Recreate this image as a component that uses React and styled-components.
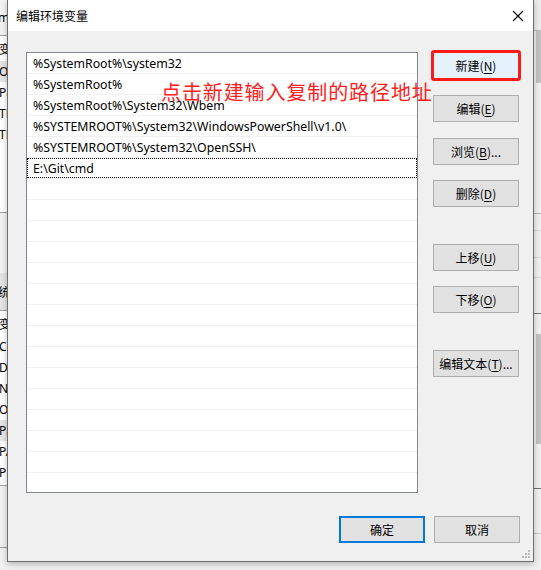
import React from "react";
import styled, { createGlobalStyle } from "styled-components";

const Global = createGlobalStyle`
  html, body { margin: 0; padding: 0; }
  body { font-family: "Noto Sans", "Noto Sans CJK SC", sans-serif; }
`;

const UI = `"Noto Sans", "Noto Sans CJK SC", sans-serif`;
const CJK = `"Noto Sans CJK SC", "Noto Sans", sans-serif`;

const Desktop = styled.div`
  position: relative;
  width: 541px;
  height: 570px;
  overflow: hidden;
  background: #f0f0f0;
`;

/* ---- window behind (left strip) ---- */
const BackLeft = styled.div`
  position: absolute;
  left: -120px;
  top: 0;
  width: 127px;
  height: 570px;
  background: #f0f0f0;
  display: flex;
  flex-direction: column;
  font-family: ${UI};
  font-size: 12px;
  color: #000;
  white-space: nowrap;
`;
const BackTitle = styled.div`
  height: 35px;
  border-bottom: 1px solid #a0a0a0;
  display: flex;
  align-items: center;
  padding-left: 118px;
  background: #f3f3f3;
`;
const BackList = styled.div`
  background: #fff;
  height: ${(p) => p.$h}px;
  display: flex;
  flex-direction: column;
  border-bottom: 1px solid #a0a0a0;
  flex-shrink: 0;
`;
const BackHead = styled.div`
  height: 25px;
  line-height: 25px;
  padding-left: 119px;
  font-family: ${CJK};
  flex-shrink: 0;
`;
const BackRow = styled.div`
  height: 21px;
  line-height: 21px;
  padding-left: 119px;
  flex-shrink: 0;
  background: ${(p) => (p.$sel ? "#e5e5e5" : "transparent")};
`;
const BackGap = styled.div`
  height: ${(p) => p.$h}px;
  flex-shrink: 0;
  display: flex;
  align-items: center;
  padding-left: ${(p) => p.$pl || 118}px;
  font-family: ${CJK};
  background: ${(p) => p.$bg || "transparent"};
  border-bottom: ${(p) => (p.$line ? "1px solid #a0a0a0" : "none")};
`;

/* ---- window behind (right strip) ---- */
const BackRight = styled.div`
  position: absolute;
  left: 533px;
  top: 0;
  width: 8px;
  height: 570px;
  background: #f0f0f0;
  display: flex;
  flex-direction: column;
`;
const RSeg = styled.div`
  height: ${(p) => p.$h}px;
  flex-shrink: 0;
  background: ${(p) => p.$bg || "transparent"};
  border-bottom: ${(p) => (p.$line ? `1px solid ${p.$line}` : "none")};
  display: flex;
  justify-content: flex-end;
`;
const RThumb = styled.div`
  width: 5px;
  height: 100%;
  background: #c2c2c2;
`;

/* ---- the dialog ---- */
const Dialog = styled.div`
  position: absolute;
  left: 7px;
  top: 0;
  width: 525px;
  height: 561px;
  border: 1px solid #6f6f6f;
  border-top: none;
  background: #f0f0f0;
  box-shadow: 0 2px 6px rgba(0, 0, 0, 0.25);
  display: flex;
  flex-direction: column;
`;

const TitleBar = styled.div`
  height: 31px;
  background: #fff;
  display: flex;
  align-items: center;
  justify-content: space-between;
  padding-left: 8px;
  flex-shrink: 0;
`;
const Title = styled.div`
  font-family: ${CJK};
  font-size: 12px;
  color: #000;
`;
const CloseBtn = styled.div`
  width: 30px;
  height: 31px;
  display: flex;
  align-items: center;
  justify-content: center;
`;

const Body = styled.div`
  flex: 1;
  display: flex;
  padding: 21px 13px 0 18px;
  gap: 15px;
  position: relative;
`;

const ListBox = styled.div`
  width: 392px;
  height: 441px;
  background: #fff;
  border: 1px solid #828790;
  box-sizing: border-box;
  overflow: hidden;
  display: flex;
  flex-direction: column;
`;
const Row = styled.div`
  height: 20px;
  flex-shrink: 0;
  border-bottom: 1px solid #f0f0f0;
  display: flex;
  align-items: stretch;
  padding: 0 1px;
`;
const RowText = styled.div`
  flex: 1;
  display: flex;
  align-items: center;
  padding-left: 5px;
  font-family: ${UI};
  font-size: 12.3px;
  color: #000;
  white-space: nowrap;
  outline: ${(p) => (p.$focus ? "1px dotted #000" : "none")};
  outline-offset: 0;
  margin: ${(p) => (p.$focus ? "1px 0" : "0")};
`;

const Side = styled.div`
  display: flex;
  flex-direction: column;
  width: 86px;
`;
const Btn = styled.div`
  width: 86px;
  height: 27px;
  box-sizing: border-box;
  border: ${(p) => (p.$def ? "1px solid #0078d7" : p.$focus ? "2px solid #0078d7" : "1px solid #adadad")};
  background: ${(p) => (p.$def ? "#e5f1fb" : "#e1e1e1")};
  display: flex;
  align-items: center;
  justify-content: center;
  font-family: ${CJK};
  font-size: 12px;
  color: #000;
  margin-top: ${(p) => p.$mt || 0}px;
  position: relative;
  flex-shrink: 0;
  u { text-decoration: underline; text-underline-offset: 2px; }
`;
const RedMark = styled.div`
  position: absolute;
  inset: -3px;
  border: 3px solid #ff1a1a;
  border-radius: 3px;
  pointer-events: none;
`;

const Footer = styled.div`
  height: 45px;
  display: flex;
  justify-content: flex-end;
  gap: 9px;
  padding-right: 13px;
  flex-shrink: 0;
  position: relative;
`;

const Note = styled.div`
  position: absolute;
  left: 153px;
  top: 49px;
  font-family: ${CJK};
  font-size: 20px;
  line-height: 24px;
  letter-spacing: 0.9px;
  color: #ff2020;
  white-space: nowrap;
`;

const Grip = styled.svg`
  position: absolute;
  right: 2px;
  bottom: 2px;
`;

const paths = [
  "%SystemRoot%\\system32",
  "%SystemRoot%",
  "%SystemRoot%\\System32\\Wbem",
  "%SYSTEMROOT%\\System32\\WindowsPowerShell\\v1.0\\",
  "%SYSTEMROOT%\\System32\\OpenSSH\\",
  "E:\\Git\\cmd",
];

export default function App() {
  const rows = Array.from({ length: 22 }, (_, i) => paths[i] || "");
  return (
    <Desktop>
      <Global />
      <BackLeft>
        <BackTitle>m</BackTitle>
        <BackList $h={176}>
          <BackHead>变量</BackHead>
          <BackRow $sel>OneDrive</BackRow>
          <BackRow>Path</BackRow>
          <BackRow>TEMP</BackRow>
          <BackRow>TMP</BackRow>
        </BackList>
        <BackGap $h={60} />
        <BackGap $h={37} $bg="#e3e3e3" $line $pl={106}>系统变量(S)</BackGap>
        <BackList $h={174}>
          <BackHead>变量</BackHead>
          <BackRow>ComSpec</BackRow>
          <BackRow>DriverData</BackRow>
          <BackRow>NUMBER_OF_PROCESSORS</BackRow>
          <BackRow>OS</BackRow>
          <BackRow $sel>Path</BackRow>
          <BackRow>PATHEXT</BackRow>
          <BackRow>PROCESSOR_ARCHITECTURE</BackRow>
        </BackList>
        <BackGap $h={61} $line />
      </BackLeft>

      <BackRight>
        <RSeg $h={30} $bg="#ececec" $line="#b8b8b8" />
        <RSeg $h={52}>
          <RThumb />
        </RSeg>
        <RSeg $h={130} $line="#b0b0b0" />
        <RSeg $h={16} $line="#d8d8d8" />
        <RSeg $h={26} $line="#d8d8d8" />
        <RSeg $h={19} $line="#d8d8d8" />
        <RSeg $h={35} $line="#707070" />
        <RSeg $h={20} />
        <RSeg $h={110}>
          <RThumb />
        </RSeg>
        <RSeg $h={44} $line="#707070" />
        <RSeg $h={44} $line="#c8c8c8" />
      </BackRight>

      <Dialog>
        <TitleBar>
          <Title>编辑环境变量</Title>
          <CloseBtn>
            <svg width="12" height="12" viewBox="0 0 12 12">
              <path d="M1 1 L11 11 M11 1 L1 11" stroke="#000" strokeWidth="1.1" fill="none" />
            </svg>
          </CloseBtn>
        </TitleBar>
        <Body>
          <ListBox>
            {rows.map((t, i) => (
              <Row key={i}>
                <RowText $focus={i === 5}>{t}</RowText>
              </Row>
            ))}
          </ListBox>
          <Side>
            <Btn $def>
              新建(<u>N</u>)
              <RedMark />
            </Btn>
            <Btn $mt={16}>编辑(<u>E</u>)</Btn>
            <Btn $mt={16}>浏览(<u>B</u>)...</Btn>
            <Btn $mt={15}>删除(<u>D</u>)</Btn>
            <Btn $mt={37}>上移(<u>U</u>)</Btn>
            <Btn $mt={15}>下移(<u>O</u>)</Btn>
            <Btn $mt={37}>编辑文本(<u>T</u>)...</Btn>
          </Side>
          <Note>点击新建输入复制的路径地址</Note>
        </Body>
        <Footer>
          <Btn $focus>确定</Btn>
          <Btn>取消</Btn>
          <Grip width="10" height="10" viewBox="0 0 10 10">
            <rect x="7" y="1" width="2" height="2" fill="#bcbcbc" />
            <rect x="4" y="4" width="2" height="2" fill="#bcbcbc" />
            <rect x="7" y="4" width="2" height="2" fill="#bcbcbc" />
            <rect x="1" y="7" width="2" height="2" fill="#bcbcbc" />
            <rect x="4" y="7" width="2" height="2" fill="#bcbcbc" />
            <rect x="7" y="7" width="2" height="2" fill="#bcbcbc" />
          </Grip>
        </Footer>
      </Dialog>
    </Desktop>
  );
}
